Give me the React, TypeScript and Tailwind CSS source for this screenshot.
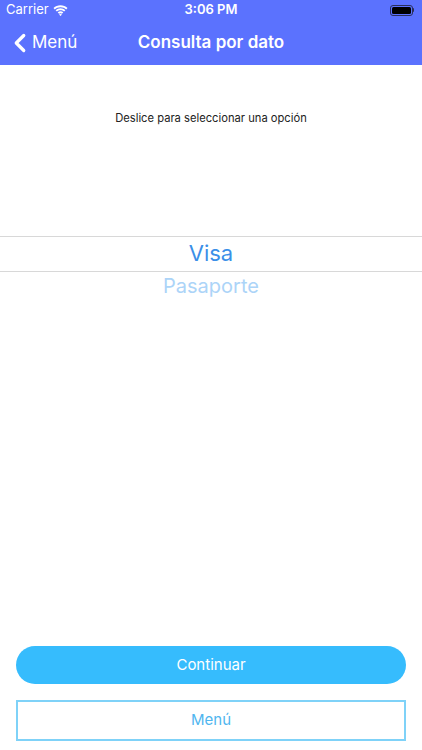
import { ChevronLeft } from 'lucide-react';

const font = { fontFamily: '"Helvetica Neue", Inter, "Liberation Sans", sans-serif' };

const StatusBar = () => (
  <div className="h-5 flex items-center justify-between px-[6px] text-white text-[13px]">
    <div className="flex items-center gap-1 w-[100px]">
      <span>Carrier</span>
      <svg width="15" height="11" viewBox="0 0 15 11" fill="white">
        <path d="M7.5 2.2c2.2 0 4.2.8 5.7 2.2l1.3-1.4C12.6 1.2 10.2.2 7.5.2S2.4 1.2.5 3l1.3 1.4c1.5-1.4 3.5-2.2 5.7-2.2z" />
        <path d="M7.5 5.2c1.4 0 2.6.5 3.6 1.4l1.3-1.4C11.1 4 9.4 3.2 7.5 3.2S3.9 4 2.6 5.2l1.3 1.4c1-.9 2.2-1.4 3.6-1.4z" />
        <path d="M7.5 8.2c.6 0 1.1.2 1.5.5l1.3-1.4c-.8-.6-1.8-1-2.8-1s-2 .4-2.8 1L6 8.7c.4-.3.9-.5 1.5-.5zM7.5 11 9 9.4c-.4-.3-.9-.5-1.5-.5S6.4 9.1 6 9.4z" />
      </svg>
    </div>
    <span className="font-semibold text-[13px]">3:06 PM</span>
    <div className="w-[100px] flex justify-end pr-[2px]">
      <div className="flex items-center">
        <div className="w-[23px] h-[11px] rounded-[3px] border border-[#2a2f5a] p-[1px]">
          <div className="w-full h-full rounded-[1.5px] bg-black" />
        </div>
        <div className="w-[1.5px] h-[4px] bg-[#2a2f5a] rounded-r-sm" />
      </div>
    </div>
  </div>
);

export default function App() {
  return (
    <div className="w-[422px] h-[750px] bg-white flex flex-col" style={font}>
      <div className="bg-[#5b72fe]">
        <StatusBar />
        <div className="h-[45px] flex items-center relative">
          <div className="flex items-center text-white text-[17px] pl-[5px]">
            <ChevronLeft size={30} strokeWidth={2.6} className="-mr-[3px]" />
            <span>Menú</span>
          </div>
          <div className="absolute inset-0 flex items-center justify-center text-white text-[17px] font-semibold pointer-events-none">
            Consulta por dato
          </div>
        </div>
      </div>

      <div className="flex-1 flex flex-col">
        <p className="text-center text-[11.2px] text-[#222] mt-[45px]">
          Deslice para seleccionar una opción
        </p>
        <div className="mt-[109px] border-t border-b border-[#d8d8d8] h-[36px] flex items-center justify-center">
          <span className="text-[22px] text-[#3b8fe8]">Visa</span>
        </div>
        <div className="flex justify-center -mt-[1px]">
          <span className="text-[20px] text-[#acd4f8] leading-[30px]">Pasaporte</span>
        </div>
      </div>

      <div className="px-4 pb-[9px] flex flex-col gap-4">
        <button className="h-[38px] rounded-full bg-[#36bcfd] text-white text-[15px]">
          Continuar
        </button>
        <button className="h-[41px] border-2 border-[#7fd2f8] text-[#4fb6ef] text-[15px]">
          Menú
        </button>
      </div>
    </div>
  );
}
